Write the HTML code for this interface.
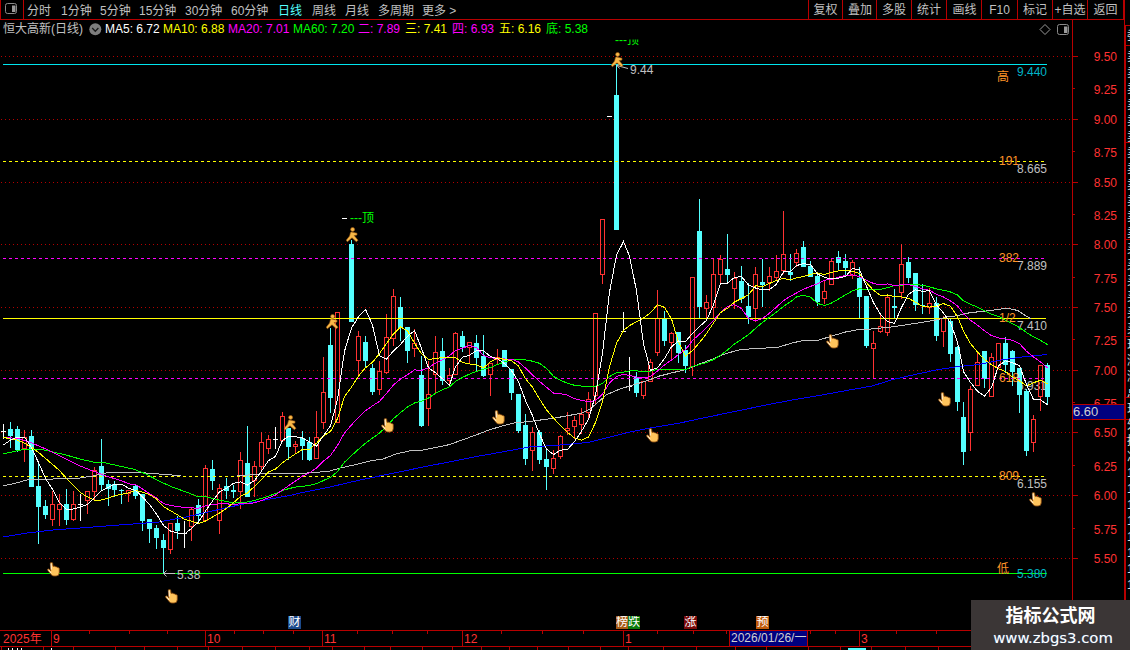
<!DOCTYPE html>
<html lang="zh-CN">
<head>
<meta charset="utf-8">
<title>恒大高新(日线)</title>
<style>
html,body{margin:0;padding:0;background:#000;}
body{width:1130px;height:650px;position:relative;overflow:hidden;font-family:"Liberation Sans","Noto Sans CJK SC",sans-serif;font-size:12px;color:#c0c0c0;}
.abs{position:absolute;white-space:nowrap;line-height:14px;}
.t{position:absolute;white-space:nowrap;top:3px;height:16px;line-height:16px;color:#c0c0c0;font-size:12px;}
.btn{position:absolute;top:0;height:19px;line-height:21px;text-align:center;color:#c0c0c0;border-left:1px solid #b80000;box-sizing:border-box;font-size:12px;}
.i{position:absolute;top:21px;height:16px;line-height:16px;white-space:nowrap;font-size:12px;}
.ax{position:absolute;left:1080px;width:37px;text-align:right;color:#ff3232;font-size:12px;line-height:14px;height:14px;}
.og{position:absolute;color:#ff9428;font-size:12px;line-height:14px;white-space:nowrap;}
.gv{position:absolute;color:#c0c0c0;font-size:12px;line-height:14px;white-space:nowrap;}
.mk{position:absolute;top:616px;width:13px;height:13px;line-height:13px;font-size:12px;color:#fff;text-align:center;overflow:hidden;}
.dl{position:absolute;top:632px;color:#ff3232;font-size:12px;line-height:14px;}
</style>
</head>
<body>
<div class="gv" style="left:1017px;top:162px">8.665</div>
<div class="gv" style="left:1017px;top:259px">7.889</div>
<div class="gv" style="left:1017px;top:319px">7.410</div>
<div class="gv" style="left:1017px;top:379px">6.931</div>
<div class="gv" style="left:1017px;top:477px">6.155</div>
<svg width="1130" height="650" viewBox="0 0 1130 650" style="position:absolute;left:0;top:0" shape-rendering="crispEdges">
<line x1="1" y1="56.5" x2="1071" y2="56.5" stroke="#b40000" stroke-width="1" stroke-dasharray="1 3"/>
<line x1="1" y1="119.5" x2="1071" y2="119.5" stroke="#b40000" stroke-width="1" stroke-dasharray="1 3"/>
<line x1="1" y1="182.5" x2="1071" y2="182.5" stroke="#b40000" stroke-width="1" stroke-dasharray="1 3"/>
<line x1="1" y1="244.5" x2="1071" y2="244.5" stroke="#b40000" stroke-width="1" stroke-dasharray="1 3"/>
<line x1="1" y1="307.5" x2="1071" y2="307.5" stroke="#b40000" stroke-width="1" stroke-dasharray="1 3"/>
<line x1="1" y1="370.5" x2="1071" y2="370.5" stroke="#b40000" stroke-width="1" stroke-dasharray="1 3"/>
<line x1="1" y1="432.5" x2="1071" y2="432.5" stroke="#b40000" stroke-width="1" stroke-dasharray="1 3"/>
<line x1="1" y1="495.5" x2="1071" y2="495.5" stroke="#b40000" stroke-width="1" stroke-dasharray="1 3"/>
<line x1="1" y1="558.5" x2="1071" y2="558.5" stroke="#b40000" stroke-width="1" stroke-dasharray="1 3"/>
<rect x="3" y="424" width="1" height="15" fill="#ffffff"/>
<rect x="1" y="431" width="5" height="1" fill="#ffffff"/>
<rect x="10" y="422" width="1" height="26" fill="#54ffff"/>
<rect x="8" y="429" width="5" height="7" fill="#54ffff"/>
<rect x="17" y="426" width="1" height="26" fill="#54ffff"/>
<rect x="15" y="429" width="5" height="21" fill="#54ffff"/>
<rect x="24" y="430" width="1" height="7" fill="#ff3232"/>
<rect x="24" y="449" width="1" height="13" fill="#ff3232"/>
<rect x="22.5" y="437.5" width="4" height="11" fill="none" stroke="#ff3232" stroke-width="1"/>
<rect x="31" y="430" width="1" height="57" fill="#54ffff"/>
<rect x="29" y="436" width="5" height="51" fill="#54ffff"/>
<rect x="38" y="462" width="1" height="82" fill="#54ffff"/>
<rect x="36" y="486" width="5" height="21" fill="#54ffff"/>
<rect x="45" y="500" width="1" height="19" fill="#54ffff"/>
<rect x="43" y="506" width="5" height="9" fill="#54ffff"/>
<rect x="52" y="491" width="1" height="13" fill="#ff3232"/>
<rect x="52" y="520" width="1" height="6" fill="#ff3232"/>
<rect x="50.5" y="504.5" width="4" height="15" fill="none" stroke="#ff3232" stroke-width="1"/>
<rect x="59" y="494" width="1" height="10" fill="#ff3232"/>
<rect x="59" y="510" width="1" height="16" fill="#ff3232"/>
<rect x="57.5" y="504.5" width="4" height="5" fill="none" stroke="#ff3232" stroke-width="1"/>
<rect x="66" y="489" width="1" height="36" fill="#54ffff"/>
<rect x="64" y="504" width="5" height="16" fill="#54ffff"/>
<rect x="73" y="491" width="1" height="13" fill="#ff3232"/>
<rect x="73" y="520" width="1" height="1" fill="#ff3232"/>
<rect x="71.5" y="504.5" width="4" height="15" fill="none" stroke="#ff3232" stroke-width="1"/>
<rect x="80" y="494" width="1" height="27" fill="#ffffff"/>
<rect x="78" y="504" width="5" height="1" fill="#ffffff"/>
<rect x="87" y="501" width="1" height="13" fill="#ff3232"/>
<rect x="85.5" y="491.5" width="4" height="9" fill="none" stroke="#ff3232" stroke-width="1"/>
<rect x="94" y="467" width="1" height="3" fill="#ff3232"/>
<rect x="94" y="492" width="1" height="8" fill="#ff3232"/>
<rect x="92.5" y="470.5" width="4" height="21" fill="none" stroke="#ff3232" stroke-width="1"/>
<rect x="101" y="439" width="1" height="52" fill="#54ffff"/>
<rect x="99" y="466" width="5" height="19" fill="#54ffff"/>
<rect x="108" y="480" width="1" height="26" fill="#54ffff"/>
<rect x="106" y="484" width="5" height="5" fill="#54ffff"/>
<rect x="114" y="481" width="1" height="16" fill="#54ffff"/>
<rect x="112" y="484" width="5" height="6" fill="#54ffff"/>
<rect x="121" y="489" width="1" height="15" fill="#54ffff"/>
<rect x="119" y="490" width="5" height="1" fill="#54ffff"/>
<rect x="128" y="494" width="1" height="8" fill="#ff3232"/>
<rect x="126.5" y="490.5" width="4" height="3" fill="none" stroke="#ff3232" stroke-width="1"/>
<rect x="135" y="485" width="1" height="14" fill="#54ffff"/>
<rect x="133" y="486" width="5" height="10" fill="#54ffff"/>
<rect x="142" y="494" width="1" height="37" fill="#54ffff"/>
<rect x="140" y="494" width="5" height="27" fill="#54ffff"/>
<rect x="149" y="519" width="1" height="24" fill="#54ffff"/>
<rect x="147" y="519" width="5" height="10" fill="#54ffff"/>
<rect x="156" y="525" width="1" height="24" fill="#54ffff"/>
<rect x="154" y="528" width="5" height="10" fill="#54ffff"/>
<rect x="163" y="534" width="1" height="40" fill="#54ffff"/>
<rect x="161" y="540" width="5" height="8" fill="#54ffff"/>
<rect x="170" y="550" width="1" height="4" fill="#ff3232"/>
<rect x="168.5" y="523.5" width="4" height="26" fill="none" stroke="#ff3232" stroke-width="1"/>
<rect x="177" y="516" width="1" height="23" fill="#54ffff"/>
<rect x="175" y="523" width="5" height="8" fill="#54ffff"/>
<rect x="184" y="521" width="1" height="27" fill="#ffffff"/>
<rect x="182" y="533" width="5" height="1" fill="#ffffff"/>
<rect x="191" y="507" width="1" height="2" fill="#ff3232"/>
<rect x="191" y="527" width="1" height="14" fill="#ff3232"/>
<rect x="189.5" y="509.5" width="4" height="17" fill="none" stroke="#ff3232" stroke-width="1"/>
<rect x="198" y="499" width="1" height="23" fill="#54ffff"/>
<rect x="196" y="505" width="5" height="11" fill="#54ffff"/>
<rect x="205" y="465" width="1" height="3" fill="#ff3232"/>
<rect x="205" y="521" width="1" height="1" fill="#ff3232"/>
<rect x="203.5" y="468.5" width="4" height="52" fill="none" stroke="#ff3232" stroke-width="1"/>
<rect x="212" y="460" width="1" height="30" fill="#54ffff"/>
<rect x="210" y="469" width="5" height="12" fill="#54ffff"/>
<rect x="219" y="484" width="1" height="4" fill="#ff3232"/>
<rect x="219" y="521" width="1" height="13" fill="#ff3232"/>
<rect x="217.5" y="488.5" width="4" height="32" fill="none" stroke="#ff3232" stroke-width="1"/>
<rect x="226" y="478" width="1" height="21" fill="#54ffff"/>
<rect x="224" y="486" width="5" height="5" fill="#54ffff"/>
<rect x="233" y="485" width="1" height="13" fill="#54ffff"/>
<rect x="231" y="490" width="5" height="2" fill="#54ffff"/>
<rect x="240" y="452" width="1" height="8" fill="#ff3232"/>
<rect x="240" y="492" width="1" height="17" fill="#ff3232"/>
<rect x="238.5" y="460.5" width="4" height="31" fill="none" stroke="#ff3232" stroke-width="1"/>
<rect x="247" y="426" width="1" height="71" fill="#54ffff"/>
<rect x="245" y="463" width="5" height="34" fill="#54ffff"/>
<rect x="254" y="461" width="1" height="5" fill="#ff3232"/>
<rect x="254" y="481" width="1" height="16" fill="#ff3232"/>
<rect x="252.5" y="466.5" width="4" height="14" fill="none" stroke="#ff3232" stroke-width="1"/>
<rect x="261" y="432" width="1" height="10" fill="#ff3232"/>
<rect x="261" y="467" width="1" height="4" fill="#ff3232"/>
<rect x="259.5" y="442.5" width="4" height="24" fill="none" stroke="#ff3232" stroke-width="1"/>
<rect x="268" y="435" width="1" height="4" fill="#ff3232"/>
<rect x="268" y="449" width="1" height="5" fill="#ff3232"/>
<rect x="266.5" y="439.5" width="4" height="9" fill="none" stroke="#ff3232" stroke-width="1"/>
<rect x="275" y="427" width="1" height="22" fill="#ffffff"/>
<rect x="273" y="439" width="5" height="1" fill="#ffffff"/>
<rect x="282" y="412" width="1" height="4" fill="#ff3232"/>
<rect x="280.5" y="416.5" width="4" height="24" fill="none" stroke="#ff3232" stroke-width="1"/>
<rect x="288" y="428" width="1" height="32" fill="#54ffff"/>
<rect x="286" y="428" width="5" height="19" fill="#54ffff"/>
<rect x="295" y="441" width="1" height="3" fill="#ff3232"/>
<rect x="295" y="447" width="1" height="7" fill="#ff3232"/>
<rect x="293.5" y="444.5" width="4" height="2" fill="none" stroke="#ff3232" stroke-width="1"/>
<rect x="302" y="431" width="1" height="29" fill="#54ffff"/>
<rect x="300" y="438" width="5" height="8" fill="#54ffff"/>
<rect x="309" y="437" width="1" height="24" fill="#54ffff"/>
<rect x="307" y="442" width="5" height="18" fill="#54ffff"/>
<rect x="316" y="411" width="1" height="26" fill="#ff3232"/>
<rect x="314.5" y="437.5" width="4" height="21" fill="none" stroke="#ff3232" stroke-width="1"/>
<rect x="323" y="357" width="1" height="35" fill="#ff3232"/>
<rect x="323" y="423" width="1" height="6" fill="#ff3232"/>
<rect x="321.5" y="392.5" width="4" height="30" fill="none" stroke="#ff3232" stroke-width="1"/>
<rect x="330" y="328" width="1" height="85" fill="#54ffff"/>
<rect x="328" y="345" width="5" height="53" fill="#54ffff"/>
<rect x="335.5" y="312.5" width="4" height="110" fill="none" stroke="#ff3232" stroke-width="1"/>
<rect x="342" y="218" width="5" height="1" fill="#ffffff"/>
<rect x="351" y="240" width="1" height="82" fill="#54ffff"/>
<rect x="349" y="244" width="5" height="78" fill="#54ffff"/>
<rect x="358" y="331" width="1" height="5" fill="#ff3232"/>
<rect x="358" y="361" width="1" height="15" fill="#ff3232"/>
<rect x="356.5" y="336.5" width="4" height="24" fill="none" stroke="#ff3232" stroke-width="1"/>
<rect x="365" y="336" width="1" height="31" fill="#54ffff"/>
<rect x="363" y="342" width="5" height="19" fill="#54ffff"/>
<rect x="372" y="364" width="1" height="31" fill="#54ffff"/>
<rect x="370" y="368" width="5" height="24" fill="#54ffff"/>
<rect x="379" y="361" width="1" height="10" fill="#ff3232"/>
<rect x="379" y="390" width="1" height="5" fill="#ff3232"/>
<rect x="377.5" y="371.5" width="4" height="18" fill="none" stroke="#ff3232" stroke-width="1"/>
<rect x="386" y="314" width="1" height="23" fill="#ff3232"/>
<rect x="386" y="373" width="1" height="1" fill="#ff3232"/>
<rect x="384.5" y="337.5" width="4" height="35" fill="none" stroke="#ff3232" stroke-width="1"/>
<rect x="393" y="289" width="1" height="7" fill="#ff3232"/>
<rect x="393" y="339" width="1" height="7" fill="#ff3232"/>
<rect x="391.5" y="296.5" width="4" height="42" fill="none" stroke="#ff3232" stroke-width="1"/>
<rect x="400" y="297" width="1" height="44" fill="#54ffff"/>
<rect x="398" y="307" width="5" height="21" fill="#54ffff"/>
<rect x="407" y="327" width="1" height="36" fill="#54ffff"/>
<rect x="405" y="327" width="5" height="24" fill="#54ffff"/>
<rect x="414" y="329" width="1" height="14" fill="#ff3232"/>
<rect x="414" y="349" width="1" height="8" fill="#ff3232"/>
<rect x="412.5" y="343.5" width="4" height="5" fill="none" stroke="#ff3232" stroke-width="1"/>
<rect x="421" y="356" width="1" height="71" fill="#54ffff"/>
<rect x="419" y="375" width="5" height="51" fill="#54ffff"/>
<rect x="428" y="361" width="1" height="33" fill="#ff3232"/>
<rect x="428" y="409" width="1" height="17" fill="#ff3232"/>
<rect x="426.5" y="394.5" width="4" height="14" fill="none" stroke="#ff3232" stroke-width="1"/>
<rect x="435" y="336" width="1" height="16" fill="#ff3232"/>
<rect x="435" y="375" width="1" height="18" fill="#ff3232"/>
<rect x="433.5" y="352.5" width="4" height="22" fill="none" stroke="#ff3232" stroke-width="1"/>
<rect x="442" y="338" width="1" height="47" fill="#54ffff"/>
<rect x="440" y="351" width="5" height="30" fill="#54ffff"/>
<rect x="449" y="368" width="1" height="7" fill="#ff3232"/>
<rect x="449" y="381" width="1" height="6" fill="#ff3232"/>
<rect x="447.5" y="375.5" width="4" height="5" fill="none" stroke="#ff3232" stroke-width="1"/>
<rect x="455" y="332" width="1" height="1" fill="#ff3232"/>
<rect x="453.5" y="333.5" width="4" height="41" fill="none" stroke="#ff3232" stroke-width="1"/>
<rect x="462" y="331" width="1" height="21" fill="#54ffff"/>
<rect x="460" y="336" width="5" height="11" fill="#54ffff"/>
<rect x="469" y="348" width="1" height="16" fill="#ff3232"/>
<rect x="467.5" y="342.5" width="4" height="5" fill="none" stroke="#ff3232" stroke-width="1"/>
<rect x="476" y="335" width="1" height="37" fill="#54ffff"/>
<rect x="474" y="343" width="5" height="15" fill="#54ffff"/>
<rect x="483" y="335" width="1" height="42" fill="#54ffff"/>
<rect x="481" y="356" width="5" height="20" fill="#54ffff"/>
<rect x="490" y="375" width="1" height="21" fill="#ff3232"/>
<rect x="488.5" y="363.5" width="4" height="11" fill="none" stroke="#ff3232" stroke-width="1"/>
<rect x="497" y="349" width="1" height="8" fill="#ff3232"/>
<rect x="497" y="360" width="1" height="5" fill="#ff3232"/>
<rect x="495.5" y="357.5" width="4" height="2" fill="none" stroke="#ff3232" stroke-width="1"/>
<rect x="504" y="350" width="1" height="17" fill="#54ffff"/>
<rect x="502" y="350" width="5" height="17" fill="#54ffff"/>
<rect x="511" y="369" width="1" height="31" fill="#54ffff"/>
<rect x="509" y="369" width="5" height="24" fill="#54ffff"/>
<rect x="518" y="394" width="1" height="39" fill="#54ffff"/>
<rect x="516" y="394" width="5" height="37" fill="#54ffff"/>
<rect x="525" y="414" width="1" height="51" fill="#54ffff"/>
<rect x="523" y="425" width="5" height="34" fill="#54ffff"/>
<rect x="532" y="427" width="1" height="5" fill="#ff3232"/>
<rect x="532" y="451" width="1" height="20" fill="#ff3232"/>
<rect x="530.5" y="432.5" width="4" height="18" fill="none" stroke="#ff3232" stroke-width="1"/>
<rect x="539" y="430" width="1" height="34" fill="#54ffff"/>
<rect x="537" y="432" width="5" height="28" fill="#54ffff"/>
<rect x="546" y="448" width="1" height="42" fill="#54ffff"/>
<rect x="544" y="459" width="5" height="8" fill="#54ffff"/>
<rect x="553" y="450" width="1" height="8" fill="#ff3232"/>
<rect x="553" y="469" width="1" height="5" fill="#ff3232"/>
<rect x="551.5" y="458.5" width="4" height="10" fill="none" stroke="#ff3232" stroke-width="1"/>
<rect x="560" y="435" width="1" height="1" fill="#ff3232"/>
<rect x="560" y="457" width="1" height="2" fill="#ff3232"/>
<rect x="558.5" y="436.5" width="4" height="20" fill="none" stroke="#ff3232" stroke-width="1"/>
<rect x="567" y="412" width="1" height="16" fill="#ff3232"/>
<rect x="567" y="431" width="1" height="4" fill="#ff3232"/>
<rect x="565.5" y="428.5" width="4" height="2" fill="none" stroke="#ff3232" stroke-width="1"/>
<rect x="574" y="416" width="1" height="4" fill="#ff3232"/>
<rect x="574" y="427" width="1" height="12" fill="#ff3232"/>
<rect x="572.5" y="420.5" width="4" height="6" fill="none" stroke="#ff3232" stroke-width="1"/>
<rect x="581" y="408" width="1" height="6" fill="#ff3232"/>
<rect x="581" y="425" width="1" height="9" fill="#ff3232"/>
<rect x="579.5" y="414.5" width="4" height="10" fill="none" stroke="#ff3232" stroke-width="1"/>
<rect x="588" y="392" width="1" height="7" fill="#ff3232"/>
<rect x="588" y="413" width="1" height="6" fill="#ff3232"/>
<rect x="586.5" y="399.5" width="4" height="13" fill="none" stroke="#ff3232" stroke-width="1"/>
<rect x="595" y="396" width="1" height="9" fill="#ff3232"/>
<rect x="593.5" y="313.5" width="4" height="82" fill="none" stroke="#ff3232" stroke-width="1"/>
<rect x="602" y="275" width="1" height="9" fill="#ff3232"/>
<rect x="600.5" y="219.5" width="4" height="55" fill="none" stroke="#ff3232" stroke-width="1"/>
<rect x="607" y="116" width="5" height="1" fill="#ffffff"/>
<rect x="616" y="64" width="1" height="166" fill="#54ffff"/>
<rect x="614" y="95" width="5" height="135" fill="#54ffff"/>
<rect x="623" y="312" width="1" height="20" fill="#ffffff"/>
<rect x="621" y="331" width="5" height="1" fill="#ffffff"/>
<rect x="629" y="357" width="1" height="34" fill="#ffffff"/>
<rect x="627" y="386" width="5" height="1" fill="#ffffff"/>
<rect x="636" y="372" width="1" height="25" fill="#54ffff"/>
<rect x="634" y="377" width="5" height="16" fill="#54ffff"/>
<rect x="643" y="396" width="1" height="3" fill="#ff3232"/>
<rect x="641.5" y="381.5" width="4" height="14" fill="none" stroke="#ff3232" stroke-width="1"/>
<rect x="650" y="359" width="1" height="3" fill="#ff3232"/>
<rect x="648.5" y="362.5" width="4" height="19" fill="none" stroke="#ff3232" stroke-width="1"/>
<rect x="657" y="290" width="1" height="28" fill="#ff3232"/>
<rect x="657" y="353" width="1" height="3" fill="#ff3232"/>
<rect x="655.5" y="318.5" width="4" height="34" fill="none" stroke="#ff3232" stroke-width="1"/>
<rect x="664" y="311" width="1" height="35" fill="#54ffff"/>
<rect x="662" y="318" width="5" height="23" fill="#54ffff"/>
<rect x="671" y="332" width="1" height="1" fill="#ff3232"/>
<rect x="671" y="343" width="1" height="17" fill="#ff3232"/>
<rect x="669.5" y="333.5" width="4" height="9" fill="none" stroke="#ff3232" stroke-width="1"/>
<rect x="678" y="332" width="1" height="31" fill="#54ffff"/>
<rect x="676" y="332" width="5" height="21" fill="#54ffff"/>
<rect x="685" y="345" width="1" height="28" fill="#54ffff"/>
<rect x="683" y="350" width="5" height="16" fill="#54ffff"/>
<rect x="692" y="367" width="1" height="9" fill="#ff3232"/>
<rect x="690.5" y="277.5" width="4" height="89" fill="none" stroke="#ff3232" stroke-width="1"/>
<rect x="699" y="199" width="1" height="120" fill="#54ffff"/>
<rect x="697" y="231" width="5" height="76" fill="#54ffff"/>
<rect x="706" y="295" width="1" height="7" fill="#ff3232"/>
<rect x="706" y="309" width="1" height="10" fill="#ff3232"/>
<rect x="704.5" y="302.5" width="4" height="6" fill="none" stroke="#ff3232" stroke-width="1"/>
<rect x="713" y="258" width="1" height="16" fill="#ff3232"/>
<rect x="713" y="308" width="1" height="10" fill="#ff3232"/>
<rect x="711.5" y="274.5" width="4" height="33" fill="none" stroke="#ff3232" stroke-width="1"/>
<rect x="720" y="255" width="1" height="4" fill="#ff3232"/>
<rect x="720" y="275" width="1" height="10" fill="#ff3232"/>
<rect x="718.5" y="259.5" width="4" height="15" fill="none" stroke="#ff3232" stroke-width="1"/>
<rect x="727" y="234" width="1" height="49" fill="#54ffff"/>
<rect x="725" y="269" width="5" height="6" fill="#54ffff"/>
<rect x="734" y="272" width="1" height="6" fill="#ff3232"/>
<rect x="734" y="289" width="1" height="20" fill="#ff3232"/>
<rect x="732.5" y="278.5" width="4" height="10" fill="none" stroke="#ff3232" stroke-width="1"/>
<rect x="741" y="266" width="1" height="37" fill="#54ffff"/>
<rect x="739" y="281" width="5" height="18" fill="#54ffff"/>
<rect x="748" y="283" width="1" height="41" fill="#54ffff"/>
<rect x="746" y="306" width="5" height="11" fill="#54ffff"/>
<rect x="755" y="267" width="1" height="7" fill="#ff3232"/>
<rect x="755" y="309" width="1" height="13" fill="#ff3232"/>
<rect x="753.5" y="274.5" width="4" height="34" fill="none" stroke="#ff3232" stroke-width="1"/>
<rect x="762" y="259" width="1" height="48" fill="#54ffff"/>
<rect x="760" y="282" width="5" height="3" fill="#54ffff"/>
<rect x="769" y="267" width="1" height="9" fill="#ff3232"/>
<rect x="769" y="283" width="1" height="8" fill="#ff3232"/>
<rect x="767.5" y="276.5" width="4" height="6" fill="none" stroke="#ff3232" stroke-width="1"/>
<rect x="776" y="255" width="1" height="16" fill="#ff3232"/>
<rect x="776" y="278" width="1" height="2" fill="#ff3232"/>
<rect x="774.5" y="271.5" width="4" height="6" fill="none" stroke="#ff3232" stroke-width="1"/>
<rect x="783" y="211" width="1" height="43" fill="#ff3232"/>
<rect x="783" y="271" width="1" height="3" fill="#ff3232"/>
<rect x="781.5" y="254.5" width="4" height="16" fill="none" stroke="#ff3232" stroke-width="1"/>
<rect x="790" y="254" width="1" height="27" fill="#54ffff"/>
<rect x="788" y="272" width="5" height="3" fill="#54ffff"/>
<rect x="796" y="249" width="1" height="4" fill="#ff3232"/>
<rect x="796" y="263" width="1" height="4" fill="#ff3232"/>
<rect x="794.5" y="253.5" width="4" height="9" fill="none" stroke="#ff3232" stroke-width="1"/>
<rect x="803" y="241" width="1" height="26" fill="#54ffff"/>
<rect x="801" y="247" width="5" height="20" fill="#54ffff"/>
<rect x="810" y="261" width="1" height="16" fill="#54ffff"/>
<rect x="808" y="266" width="5" height="11" fill="#54ffff"/>
<rect x="817" y="275" width="1" height="31" fill="#54ffff"/>
<rect x="815" y="276" width="5" height="26" fill="#54ffff"/>
<rect x="824" y="281" width="1" height="10" fill="#ff3232"/>
<rect x="824" y="299" width="1" height="5" fill="#ff3232"/>
<rect x="822.5" y="291.5" width="4" height="7" fill="none" stroke="#ff3232" stroke-width="1"/>
<rect x="831" y="258" width="1" height="3" fill="#ff3232"/>
<rect x="829.5" y="261.5" width="4" height="23" fill="none" stroke="#ff3232" stroke-width="1"/>
<rect x="838" y="251" width="1" height="19" fill="#54ffff"/>
<rect x="836" y="257" width="5" height="6" fill="#54ffff"/>
<rect x="845" y="254" width="1" height="21" fill="#54ffff"/>
<rect x="843" y="261" width="5" height="7" fill="#54ffff"/>
<rect x="852" y="260" width="1" height="2" fill="#ff3232"/>
<rect x="852" y="276" width="1" height="3" fill="#ff3232"/>
<rect x="850.5" y="262.5" width="4" height="13" fill="none" stroke="#ff3232" stroke-width="1"/>
<rect x="859" y="267" width="1" height="52" fill="#54ffff"/>
<rect x="857" y="278" width="5" height="19" fill="#54ffff"/>
<rect x="866" y="296" width="1" height="52" fill="#54ffff"/>
<rect x="864" y="296" width="5" height="50" fill="#54ffff"/>
<rect x="873" y="331" width="1" height="12" fill="#ff3232"/>
<rect x="873" y="349" width="1" height="30" fill="#ff3232"/>
<rect x="871.5" y="343.5" width="4" height="5" fill="none" stroke="#ff3232" stroke-width="1"/>
<rect x="880" y="315" width="1" height="11" fill="#ff3232"/>
<rect x="880" y="332" width="1" height="1" fill="#ff3232"/>
<rect x="878.5" y="326.5" width="4" height="5" fill="none" stroke="#ff3232" stroke-width="1"/>
<rect x="887" y="294" width="1" height="3" fill="#ff3232"/>
<rect x="887" y="333" width="1" height="3" fill="#ff3232"/>
<rect x="885.5" y="297.5" width="4" height="35" fill="none" stroke="#ff3232" stroke-width="1"/>
<rect x="894" y="289" width="1" height="30" fill="#54ffff"/>
<rect x="892" y="306" width="5" height="2" fill="#54ffff"/>
<rect x="901" y="244" width="1" height="20" fill="#ff3232"/>
<rect x="901" y="293" width="1" height="6" fill="#ff3232"/>
<rect x="899.5" y="264.5" width="4" height="28" fill="none" stroke="#ff3232" stroke-width="1"/>
<rect x="908" y="257" width="1" height="26" fill="#54ffff"/>
<rect x="906" y="262" width="5" height="16" fill="#54ffff"/>
<rect x="915" y="273" width="1" height="38" fill="#54ffff"/>
<rect x="913" y="273" width="5" height="32" fill="#54ffff"/>
<rect x="922" y="284" width="1" height="30" fill="#54ffff"/>
<rect x="920" y="305" width="5" height="1" fill="#54ffff"/>
<rect x="929" y="288" width="1" height="15" fill="#ff3232"/>
<rect x="929" y="308" width="1" height="6" fill="#ff3232"/>
<rect x="927.5" y="303.5" width="4" height="4" fill="none" stroke="#ff3232" stroke-width="1"/>
<rect x="936" y="297" width="1" height="44" fill="#54ffff"/>
<rect x="934" y="303" width="5" height="33" fill="#54ffff"/>
<rect x="943" y="316" width="1" height="2" fill="#ff3232"/>
<rect x="943" y="332" width="1" height="15" fill="#ff3232"/>
<rect x="941.5" y="318.5" width="4" height="13" fill="none" stroke="#ff3232" stroke-width="1"/>
<rect x="950" y="318" width="1" height="44" fill="#54ffff"/>
<rect x="948" y="321" width="5" height="33" fill="#54ffff"/>
<rect x="957" y="346" width="1" height="65" fill="#54ffff"/>
<rect x="955" y="347" width="5" height="55" fill="#54ffff"/>
<rect x="963" y="402" width="1" height="63" fill="#54ffff"/>
<rect x="961" y="417" width="5" height="35" fill="#54ffff"/>
<rect x="970" y="386" width="1" height="3" fill="#ff3232"/>
<rect x="970" y="433" width="1" height="18" fill="#ff3232"/>
<rect x="968.5" y="389.5" width="4" height="43" fill="none" stroke="#ff3232" stroke-width="1"/>
<rect x="977" y="351" width="1" height="11" fill="#ff3232"/>
<rect x="975.5" y="362.5" width="4" height="23" fill="none" stroke="#ff3232" stroke-width="1"/>
<rect x="984" y="351" width="1" height="37" fill="#54ffff"/>
<rect x="982" y="351" width="5" height="28" fill="#54ffff"/>
<rect x="991" y="353" width="1" height="4" fill="#ff3232"/>
<rect x="989.5" y="357.5" width="4" height="39" fill="none" stroke="#ff3232" stroke-width="1"/>
<rect x="996.5" y="343.5" width="4" height="24" fill="none" stroke="#ff3232" stroke-width="1"/>
<rect x="1005" y="337" width="1" height="36" fill="#54ffff"/>
<rect x="1003" y="343" width="5" height="22" fill="#54ffff"/>
<rect x="1012" y="350" width="1" height="36" fill="#54ffff"/>
<rect x="1010" y="351" width="5" height="21" fill="#54ffff"/>
<rect x="1019" y="368" width="1" height="45" fill="#54ffff"/>
<rect x="1017" y="368" width="5" height="27" fill="#54ffff"/>
<rect x="1026" y="389" width="1" height="67" fill="#54ffff"/>
<rect x="1024" y="391" width="5" height="60" fill="#54ffff"/>
<rect x="1033" y="415" width="1" height="4" fill="#ff3232"/>
<rect x="1033" y="443" width="1" height="9" fill="#ff3232"/>
<rect x="1031.5" y="419.5" width="4" height="23" fill="none" stroke="#ff3232" stroke-width="1"/>
<rect x="1040" y="397" width="1" height="14" fill="#ff3232"/>
<rect x="1038.5" y="365.5" width="4" height="31" fill="none" stroke="#ff3232" stroke-width="1"/>
<rect x="1047" y="363" width="1" height="42" fill="#54ffff"/>
<rect x="1045" y="365" width="5" height="32" fill="#54ffff"/>
<line x1="3" y1="64.5" x2="1047" y2="64.5" stroke="#00e5ee" stroke-width="1"/>
<line x1="3" y1="161.5" x2="1044" y2="161.5" stroke="#ffff00" stroke-width="1" stroke-dasharray="3 3"/>
<line x1="3" y1="258.5" x2="1044" y2="258.5" stroke="#ff00ff" stroke-width="1" stroke-dasharray="3 3"/>
<line x1="3" y1="318.5" x2="1046" y2="318.5" stroke="#ffff00" stroke-width="1"/>
<line x1="3" y1="378.5" x2="1046" y2="378.5" stroke="#ff00ff" stroke-width="1" stroke-dasharray="3 3"/>
<line x1="3" y1="476.5" x2="1044" y2="476.5" stroke="#ffff00" stroke-width="1" stroke-dasharray="3 3"/>
<line x1="3" y1="573.5" x2="1047" y2="573.5" stroke="#00ff00" stroke-width="1"/>
<polyline points="3.0,537.0 27.0,533.0 53.0,530.0 80.0,528.0 106.0,526.0 133.0,524.0 159.0,522.0 186.0,517.0 212.0,511.0 239.0,505.0 265.0,500.0 292.0,495.0 300.0,493.0 330.0,487.0 360.0,480.0 404.0,471.0 423.0,467.0 449.0,462.0 476.0,456.6 502.0,452.0 529.0,447.0 555.0,445.5 582.0,443.0 590.0,442.0 610.0,437.0 630.0,432.0 650.0,428.0 680.0,423.0 689.0,421.0 712.7,416.0 739.0,410.6 766.0,405.0 792.0,400.0 819.0,395.5 845.5,390.7 872.0,386.0 893.0,379.5 914.6,374.6 936.0,370.0 957.7,366.6 979.0,364.5 1000.8,360.0 1022.0,357.0 1043.8,354.8 1047.0,354.0" fill="none" stroke="#0000ff" stroke-width="1"/>
<polyline points="3.0,486.0 16.0,483.0 27.0,480.0 53.0,479.0 80.0,478.0 93.0,476.0 106.0,473.0 119.0,472.0 133.0,472.0 146.0,473.0 159.0,474.0 172.0,475.0 181.0,476.0" fill="none" stroke="#c0c0c0" stroke-width="1"/>
<polyline points="237.0,476.0 260.0,474.0 300.0,473.6 320.0,472.0 330.0,471.0 340.0,468.0 356.0,464.6 370.0,461.0 383.0,459.0 396.0,454.0 409.0,451.0 423.0,450.0 449.0,444.7 476.0,435.0 489.0,430.0 502.0,426.0 516.0,422.6 529.0,421.6 555.0,418.0 569.0,415.5 582.0,413.0 590.0,409.0 593.0,406.6 606.5,394.7 620.0,389.0 633.0,385.0 646.0,381.0 659.6,376.0 673.0,372.6 686.0,369.5 699.5,364.0 712.7,359.0 726.0,353.5 739.0,350.0 752.6,348.7 766.0,348.0 779.0,347.0 792.0,343.0 805.6,340.0 819.0,340.0 832.0,336.0 845.5,332.0 858.7,329.6 871.5,329.0 893.0,326.8 914.6,323.5 936.0,320.0 947.0,317.0 957.7,315.6 968.5,313.0 979.0,311.7 990.0,310.6 1000.8,309.0 1009.0,308.5 1018.0,310.6 1024.5,315.0 1031.0,319.0" fill="none" stroke="#c0c0c0" stroke-width="1"/>
<polyline points="3.0,454.0 16.0,451.0 27.0,449.0 40.0,449.0 53.0,452.0 66.0,455.0 80.0,459.0 93.0,462.0 106.0,463.0 119.0,466.0 133.0,469.0 146.0,474.0 159.0,481.0 172.0,487.0 186.0,492.0 199.0,497.0 205.5,496.7 212.5,498.3 219.5,500.1 226.5,501.4 233.5,503.2 240.5,502.4 247.5,502.0 254.5,500.4 261.5,498.4 268.5,496.2 275.5,493.5 282.5,490.6 288.5,488.7 295.5,487.1 302.5,486.3 309.5,485.4 316.5,483.7 323.5,480.5 330.5,477.4 337.5,471.5 344.5,462.2 351.5,455.6 358.5,449.2 365.5,443.3 372.5,438.1 379.5,433.0 386.5,426.6 393.5,418.7 400.5,412.6 407.5,407.1 414.5,403.0 421.5,401.1 428.5,398.0 435.5,393.4 442.5,389.7 449.5,386.9 455.5,381.4 462.5,377.4 469.5,374.1 476.5,371.4 483.5,369.2 490.5,367.5 497.5,364.5 504.5,361.9 511.5,360.1 518.5,359.2 525.5,359.9 532.5,361.2 539.5,363.3 546.5,368.4 553.5,376.4 560.5,380.2 567.5,383.3 574.5,385.3 581.5,386.1 588.5,387.0 595.5,386.2 602.5,383.6 609.5,376.6 616.5,372.6 623.5,372.2 629.5,370.9 636.5,370.8 643.5,371.8 650.5,371.2 657.5,369.3 664.5,369.5 671.5,369.1 678.5,369.4 685.5,369.7 692.5,366.4 699.5,364.5 706.5,362.7 713.5,359.6 720.5,355.2 727.5,350.0 734.5,344.0 741.5,339.5 748.5,334.7 755.5,328.3 762.5,322.5 769.5,317.2 776.5,312.0 783.5,306.4 790.5,301.8 796.5,296.9 803.5,295.3 810.5,297.2 817.5,303.4 824.5,305.5 831.5,303.1 838.5,299.0 845.5,294.8 852.5,290.9 859.5,288.7 866.5,289.6 873.5,289.7 880.5,289.4 887.5,287.6 894.5,285.7 901.5,285.2 908.5,284.3 915.5,284.3 922.5,285.4 929.5,286.8 936.5,288.9 943.5,290.2 950.5,292.0 957.5,294.9 963.5,300.8 970.5,304.3 977.5,307.1 984.5,310.7 991.5,314.1 998.5,316.4 1005.5,320.1 1012.5,323.6 1019.5,327.6 1026.5,332.5 1033.5,336.8 1040.5,340.3 1047.5,344.7" fill="none" stroke="#00ff00" stroke-width="1"/>
<polyline points="3.0,437.0 20.0,439.0 32.0,443.0 48.0,450.0 64.0,458.0 80.0,466.0 93.0,471.0 106.0,476.0 119.0,480.0 130.0,484.0 135.5,484.5 142.5,488.9 149.5,493.6 156.5,498.0 163.5,503.5 170.5,505.4 177.5,506.6 184.5,507.5 191.5,507.8 198.5,508.3 205.5,505.8 212.5,504.6 219.5,503.8 226.5,503.7 233.5,504.8 240.5,503.6 247.5,503.9 254.5,502.8 261.5,500.4 268.5,497.9 275.5,495.1 282.5,489.9 288.5,485.8 295.5,481.1 302.5,476.0 309.5,472.8 316.5,468.1 323.5,461.1 330.5,455.5 337.5,445.4 344.5,432.9 351.5,424.9 358.5,417.3 365.5,410.8 372.5,405.8 379.5,401.4 386.5,393.4 393.5,384.9 400.5,379.1 407.5,374.7 414.5,369.9 421.5,370.4 428.5,367.8 435.5,363.1 442.5,359.9 449.5,355.7 455.5,350.5 462.5,348.2 469.5,345.4 476.5,347.7 483.5,355.6 490.5,357.6 497.5,358.7 504.5,359.0 511.5,359.1 518.5,362.0 525.5,368.1 532.5,374.9 539.5,381.4 546.5,387.2 553.5,393.0 560.5,393.6 567.5,395.2 574.5,398.6 581.5,400.4 588.5,401.6 595.5,400.6 602.5,394.2 609.5,382.9 616.5,376.5 623.5,374.3 629.5,375.4 636.5,377.2 643.5,377.9 650.5,376.4 657.5,370.9 664.5,364.9 671.5,360.0 678.5,354.6 685.5,349.6 692.5,340.6 699.5,334.1 706.5,327.8 713.5,320.4 720.5,312.7 727.5,306.4 734.5,304.7 741.5,308.6 748.5,318.6 755.5,320.9 762.5,318.6 769.5,313.1 776.5,307.0 783.5,300.6 790.5,296.2 796.5,293.0 803.5,289.3 810.5,286.4 817.5,283.9 824.5,280.2 831.5,279.4 838.5,277.2 845.5,275.4 852.5,274.9 859.5,276.7 866.5,280.2 873.5,283.5 880.5,284.9 887.5,283.9 894.5,285.6 901.5,284.6 908.5,284.6 915.5,286.3 922.5,288.9 929.5,290.3 936.5,294.4 943.5,297.0 950.5,300.9 957.5,305.9 963.5,313.9 970.5,320.2 977.5,325.2 984.5,330.8 991.5,335.6 998.5,337.9 1005.5,338.9 1012.5,340.2 1019.5,343.6 1026.5,351.3 1033.5,356.9 1040.5,361.9 1047.5,367.9" fill="none" stroke="#ff00ff" stroke-width="1"/>
<polyline points="3.0,437.0 10.0,439.0 17.0,440.0 24.0,443.0 31.0,447.0 38.0,452.0 45.0,458.0 52.0,464.0 59.0,470.0 66.5,478.5 73.5,485.8 80.5,492.7 87.5,496.9 94.5,500.2 101.5,500.0 108.5,498.2 114.5,495.7 121.5,494.3 128.5,492.9 135.5,490.5 142.5,492.1 149.5,494.5 156.5,499.1 163.5,506.8 170.5,510.7 177.5,514.9 184.5,519.3 191.5,521.2 198.5,523.7 205.5,521.0 212.5,517.0 219.5,513.0 226.5,508.3 233.5,502.7 240.5,496.4 247.5,493.0 254.5,486.3 261.5,479.6 268.5,472.0 275.5,469.1 282.5,462.7 288.5,458.5 295.5,453.9 302.5,449.3 309.5,449.2 316.5,443.3 323.5,435.9 330.5,431.4 337.5,418.7 344.5,396.6 351.5,387.1 358.5,376.1 365.5,367.7 372.5,362.3 379.5,353.5 386.5,343.5 393.5,333.9 400.5,326.9 407.5,330.7 414.5,343.2 421.5,353.6 428.5,359.4 435.5,358.6 442.5,357.5 449.5,357.9 455.5,357.5 462.5,362.5 469.5,364.0 476.5,364.7 483.5,367.9 490.5,361.7 497.5,358.0 504.5,359.4 511.5,360.6 518.5,366.1 525.5,378.6 532.5,387.2 539.5,398.9 546.5,409.8 553.5,418.1 560.5,425.4 567.5,432.5 574.5,437.9 581.5,440.1 588.5,437.0 595.5,422.5 602.5,401.2 609.5,366.9 616.5,343.2 623.5,330.5 629.5,325.5 636.5,321.9 643.5,318.0 650.5,312.8 657.5,304.7 664.5,307.4 671.5,318.8 678.5,342.4 685.5,356.0 692.5,350.6 699.5,342.6 706.5,333.6 713.5,322.9 720.5,312.6 727.5,308.2 734.5,302.0 741.5,298.5 748.5,294.9 755.5,285.8 762.5,286.5 769.5,283.5 776.5,280.4 783.5,278.4 790.5,279.9 796.5,277.8 803.5,276.6 810.5,274.4 817.5,272.9 824.5,274.6 831.5,272.3 838.5,270.9 845.5,270.5 852.5,271.3 859.5,273.5 866.5,282.7 873.5,290.4 880.5,295.4 887.5,295.0 894.5,296.6 901.5,296.9 908.5,298.4 915.5,302.1 922.5,306.4 929.5,307.1 936.5,306.1 943.5,303.6 950.5,306.3 957.5,316.7 963.5,331.1 970.5,343.6 977.5,352.1 984.5,359.5 991.5,364.7 998.5,368.7 1005.5,371.6 1012.5,376.9 1019.5,381.0 1026.5,385.9 1033.5,382.7 1040.5,380.3 1047.5,383.7" fill="none" stroke="#ffff00" stroke-width="1"/>
<polyline points="3.5,445.0 10.5,440.0 17.5,437.0 24.5,437.0 31.5,447.6 38.5,462.6 45.5,478.4 52.5,489.4 59.5,502.8 66.5,509.4 73.5,509.0 80.5,507.0 87.5,504.4 94.5,497.6 101.5,490.6 108.5,487.4 114.5,484.4 121.5,484.2 128.5,488.2 135.5,490.4 142.5,496.8 149.5,504.6 156.5,514.0 163.5,525.4 170.5,531.0 177.5,533.0 184.5,534.0 191.5,528.4 198.5,522.0 205.5,511.0 212.5,501.0 219.5,492.0 226.5,488.2 233.5,483.4 240.5,481.8 247.5,485.0 254.5,480.6 261.5,471.0 268.5,460.6 275.5,456.4 282.5,440.4 288.5,436.4 295.5,436.8 302.5,438.0 309.5,442.0 316.5,446.2 323.5,435.4 330.5,426.0 337.5,399.4 344.5,351.2 351.5,328.0 358.5,316.8 365.5,309.4 372.5,325.2 379.5,355.8 386.5,359.0 393.5,351.0 400.5,344.4 407.5,336.2 414.5,330.6 421.5,348.2 428.5,367.8 435.5,372.8 442.5,378.8 449.5,385.2 455.5,366.8 462.5,357.2 469.5,355.2 476.5,350.6 483.5,350.6 490.5,356.6 497.5,358.8 504.5,363.6 511.5,370.6 518.5,381.6 525.5,400.6 532.5,415.6 539.5,434.2 546.5,449.0 553.5,454.6 560.5,450.2 567.5,449.4 574.5,441.6 581.5,431.2 588.5,419.4 595.5,394.8 602.5,353.0 609.5,292.2 616.5,255.2 623.5,241.6 629.5,256.2 636.5,290.8 643.5,343.8 650.5,370.4 657.5,367.8 664.5,358.6 671.5,346.8 678.5,341.0 685.5,341.6 692.5,333.4 699.5,326.6 706.5,320.4 713.5,304.8 720.5,283.6 727.5,283.0 734.5,277.4 741.5,276.6 748.5,285.0 755.5,288.0 762.5,290.0 769.5,289.6 776.5,284.2 783.5,271.8 790.5,271.8 796.5,265.6 803.5,263.6 810.5,264.6 817.5,274.0 824.5,277.4 831.5,279.0 838.5,278.2 845.5,276.4 852.5,268.6 859.5,269.6 866.5,286.4 873.5,302.6 880.5,314.4 887.5,321.4 894.5,323.6 901.5,307.4 908.5,294.2 915.5,289.8 922.5,291.4 929.5,290.6 936.5,304.8 943.5,313.0 950.5,322.8 957.5,342.0 963.5,371.6 970.5,382.4 977.5,391.2 984.5,396.2 991.5,387.4 998.5,365.8 1005.5,360.8 1012.5,362.6 1019.5,365.8 1026.5,384.4 1033.5,399.6 1040.5,399.8 1047.5,404.8" fill="none" stroke="#ffffff" stroke-width="1"/>
</svg>
<!-- top toolbar -->
<div style="position:absolute;left:0;top:0;width:1124px;height:19px;border-left:1px solid #b80000;border-bottom:1px solid #b80000;box-sizing:content-box;"></div>
<div style="position:absolute;left:23px;top:0;width:1px;height:19px;background:#b80000;"></div>
<svg style="position:absolute;left:4px;top:2px" width="15" height="13" viewBox="0 0 15 13"><rect x="1.5" y="1.5" width="11" height="10" rx="2" fill="none" stroke="#8a8a8a" stroke-width="1"/><rect x="8" y="3.5" width="3.5" height="6.5" fill="#9a9a9a"/></svg>
<div class="t" style="left:27px">分时</div>
<div class="t" style="left:61px">1分钟</div>
<div class="t" style="left:100px">5分钟</div>
<div class="t" style="left:139px">15分钟</div>
<div class="t" style="left:185px">30分钟</div>
<div class="t" style="left:231px">60分钟</div>
<div class="t" style="left:278px;color:#54ffff">日线</div>
<div class="t" style="left:312px">周线</div>
<div class="t" style="left:345px">月线</div>
<div class="t" style="left:378px">多周期</div>
<div class="t" style="left:422px">更多 &gt;</div>
<div class="btn" style="left:808px;width:34px">复权</div>
<div class="btn" style="left:842px;width:35px">叠加</div>
<div class="btn" style="left:876px;width:35px">多股</div>
<div class="btn" style="left:911px;width:35px">统计</div>
<div class="btn" style="left:946px;width:36px">画线</div>
<div class="btn" style="left:981px;width:36px">F10</div>
<div class="btn" style="left:1017px;width:35px">标记</div>
<div class="btn" style="left:1052px;width:35px">+自选</div>
<div class="btn" style="left:1087px;width:37px;border-right:1px solid #b80000">返回</div>
<!-- info row -->
<div class="i" style="left:3px;color:#c0c0c0">恒大高新(日线)</div>
<svg style="position:absolute;left:89px;top:23px" width="13" height="13" viewBox="0 0 13 13"><circle cx="6.3" cy="6.3" r="6" fill="#7d7d7d"/><path d="M3.2 5 L6.3 8.2 L9.4 5" fill="none" stroke="#1a1a1a" stroke-width="1.3"/></svg>
<div class="i" style="left:105px;color:#ffffff">MA5: 6.72</div>
<div class="i" style="left:163px;color:#ffff00">MA10: 6.88</div>
<div class="i" style="left:228px;color:#ff00ff">MA20: 7.01</div>
<div class="i" style="left:293px;color:#00ff00">MA60: 7.20</div>
<div class="i" style="left:358px;color:#ff00ff">二: 7.89</div>
<div class="i" style="left:405px;color:#ffff00">三: 7.41</div>
<div class="i" style="left:452px;color:#ff00ff">四: 6.93</div>
<div class="i" style="left:499px;color:#ffff00">五: 6.16</div>
<div class="i" style="left:546px;color:#00ff00">底: 5.38</div>
<svg style="position:absolute;left:1037px;top:22px" width="34" height="16" viewBox="0 0 34 16"><path d="M8 2.5 L13 7.5 L8 12.5 L3 7.5 Z" fill="none" stroke="#9a9a9a" stroke-width="1"/><rect x="20.5" y="2.5" width="11" height="10" rx="2" fill="none" stroke="#8a8a8a" stroke-width="1"/><rect x="27" y="4.5" width="3.5" height="6.5" fill="#9a9a9a"/></svg>
<svg width="1130" height="650" viewBox="0 0 1130 650" style="position:absolute;left:0;top:0" shape-rendering="crispEdges">
<rect x="1072" y="19" width="1" height="628" fill="#b80000"/>
<rect x="1124" y="0" width="1" height="650" fill="#b80000"/>
<rect x="1125" y="25" width="1" height="625" fill="#b80000"/>
<rect x="1073" y="56" width="5" height="1" fill="#b80000"/>
<rect x="1073" y="88" width="2" height="1" fill="#b80000"/>
<rect x="1073" y="119" width="5" height="1" fill="#b80000"/>
<rect x="1073" y="151" width="2" height="1" fill="#b80000"/>
<rect x="1073" y="182" width="5" height="1" fill="#b80000"/>
<rect x="1073" y="214" width="2" height="1" fill="#b80000"/>
<rect x="1073" y="244" width="5" height="1" fill="#b80000"/>
<rect x="1073" y="277" width="2" height="1" fill="#b80000"/>
<rect x="1073" y="307" width="5" height="1" fill="#b80000"/>
<rect x="1073" y="339" width="2" height="1" fill="#b80000"/>
<rect x="1073" y="370" width="5" height="1" fill="#b80000"/>
<rect x="1073" y="402" width="2" height="1" fill="#b80000"/>
<rect x="1073" y="432" width="5" height="1" fill="#b80000"/>
<rect x="1073" y="465" width="2" height="1" fill="#b80000"/>
<rect x="1073" y="495" width="5" height="1" fill="#b80000"/>
<rect x="1073" y="528" width="2" height="1" fill="#b80000"/>
<rect x="1073" y="558" width="5" height="1" fill="#b80000"/>
<rect x="0" y="630" width="1124" height="1" fill="#b80000"/>
<rect x="0" y="646" width="1124" height="1" fill="#b80000"/>
<rect x="51" y="630" width="1" height="16" fill="#b80000"/>
<rect x="205" y="630" width="1" height="16" fill="#b80000"/>
<rect x="322" y="630" width="1" height="16" fill="#b80000"/>
<rect x="462" y="630" width="1" height="16" fill="#b80000"/>
<rect x="623" y="630" width="1" height="16" fill="#b80000"/>
<rect x="859" y="630" width="1" height="16" fill="#b80000"/>
<rect x="89" y="631" width="1" height="3" fill="#b80000"/>
<rect x="129" y="631" width="1" height="3" fill="#b80000"/>
<rect x="167" y="631" width="1" height="3" fill="#b80000"/>
<rect x="234" y="631" width="1" height="3" fill="#b80000"/>
<rect x="263" y="631" width="1" height="3" fill="#b80000"/>
<rect x="293" y="631" width="1" height="3" fill="#b80000"/>
<rect x="357" y="631" width="1" height="3" fill="#b80000"/>
<rect x="392" y="631" width="1" height="3" fill="#b80000"/>
<rect x="427" y="631" width="1" height="3" fill="#b80000"/>
<rect x="501" y="631" width="1" height="3" fill="#b80000"/>
<rect x="542" y="631" width="1" height="3" fill="#b80000"/>
<rect x="583" y="631" width="1" height="3" fill="#b80000"/>
<rect x="657" y="631" width="1" height="3" fill="#b80000"/>
<rect x="693" y="631" width="1" height="3" fill="#b80000"/>
<rect x="726" y="631" width="1" height="3" fill="#b80000"/>
<rect x="810" y="631" width="1" height="3" fill="#b80000"/>
<rect x="835" y="631" width="1" height="3" fill="#b80000"/>
<rect x="896" y="631" width="1" height="3" fill="#b80000"/>
<rect x="936" y="631" width="1" height="3" fill="#b80000"/>
<rect x="975" y="631" width="1" height="3" fill="#b80000"/>
<rect x="1014" y="631" width="1" height="3" fill="#b80000"/>
<rect x="1052" y="631" width="1" height="3" fill="#b80000"/>
<rect x="1" y="647" width="1" height="3" fill="#b80000"/>
<rect x="43" y="647" width="1" height="3" fill="#b80000"/>
<rect x="73" y="647" width="1" height="3" fill="#b80000"/>
<rect x="115" y="647" width="1" height="3" fill="#b80000"/>
<rect x="144" y="647" width="1" height="3" fill="#b80000"/>
<rect x="177" y="647" width="1" height="3" fill="#b80000"/>
<rect x="208" y="647" width="1" height="3" fill="#b80000"/>
<rect x="242" y="647" width="1" height="3" fill="#b80000"/>
<rect x="275" y="647" width="1" height="3" fill="#b80000"/>
<rect x="309" y="647" width="1" height="3" fill="#b80000"/>
<rect x="332" y="647" width="1" height="3" fill="#b80000"/>
<rect x="364" y="647" width="1" height="3" fill="#b80000"/>
<rect x="390" y="647" width="1" height="3" fill="#b80000"/>
<rect x="422" y="647" width="1" height="3" fill="#b80000"/>
<rect x="452" y="647" width="1" height="3" fill="#b80000"/>
<rect x="481" y="647" width="1" height="3" fill="#b80000"/>
<rect x="509" y="647" width="1" height="3" fill="#b80000"/>
<rect x="537" y="647" width="1" height="3" fill="#b80000"/>
<rect x="568" y="647" width="1" height="3" fill="#b80000"/>
<rect x="600" y="647" width="1" height="3" fill="#b80000"/>
<rect x="628" y="647" width="1" height="3" fill="#b80000"/>
<rect x="663" y="647" width="1" height="3" fill="#b80000"/>
<rect x="696" y="647" width="1" height="3" fill="#b80000"/>
<rect x="735" y="647" width="1" height="3" fill="#b80000"/>
<rect x="766" y="647" width="1" height="3" fill="#b80000"/>
<rect x="808" y="647" width="1" height="3" fill="#b80000"/>
<rect x="840" y="647" width="1" height="3" fill="#b80000"/>
<rect x="871" y="647" width="1" height="3" fill="#b80000"/>
<rect x="905" y="647" width="1" height="3" fill="#b80000"/>
<rect x="938" y="647" width="1" height="3" fill="#b80000"/>
<rect x="848" y="648" width="18" height="2" fill="#54ffff"/>
<rect x="8" y="648" width="1" height="2" fill="#fff"/><rect x="12" y="648" width="1" height="2" fill="#fff"/><rect x="17" y="648" width="1" height="2" fill="#fff"/><rect x="21" y="648" width="1" height="2" fill="#fff"/><rect x="51" y="648" width="1" height="2" fill="#fff"/>
<rect x="1125" y="25" width="5" height="1" fill="#b80000"/>
<rect x="1125" y="45" width="5" height="1" fill="#b80000"/>
<rect x="1125" y="142" width="5" height="1" fill="#b80000"/>
<rect x="1125" y="239" width="5" height="1" fill="#b80000"/>
<rect x="1125" y="336" width="5" height="1" fill="#b80000"/>
<rect x="1125" y="397" width="5" height="1" fill="#b80000"/>
<rect x="1125" y="419" width="5" height="1" fill="#b80000"/>
<rect x="1125" y="437" width="5" height="1" fill="#b80000"/>
</svg>
<div class="ax" style="top:50.0px">9.50</div>
<div class="ax" style="top:82.5px">9.25</div>
<div class="ax" style="top:113.0px">9.00</div>
<div class="ax" style="top:145.5px">8.75</div>
<div class="ax" style="top:176.0px">8.50</div>
<div class="ax" style="top:208.5px">8.25</div>
<div class="ax" style="top:238.0px">8.00</div>
<div class="ax" style="top:271.5px">7.75</div>
<div class="ax" style="top:301.0px">7.50</div>
<div class="ax" style="top:333.5px">7.25</div>
<div class="ax" style="top:364.0px">7.00</div>
<div class="ax" style="top:396.5px">6.75</div>
<div class="ax" style="top:426.0px">6.50</div>
<div class="ax" style="top:459.5px">6.25</div>
<div class="ax" style="top:489.0px">6.00</div>
<div class="ax" style="top:522.5px">5.75</div>
<div class="ax" style="top:552.0px">5.50</div>
<div style="position:absolute;left:1073px;top:404px;width:51px;height:14px;background:#000080;border-top:1px solid #b80000;border-bottom:1px solid #b80000;color:#d0d0d0;font-size:13px;line-height:14px;">6.60</div>
<div class="og" style="left:997px;top:70px">高</div>
<div class="gv" style="left:1017px;top:65px;color:#00b4c8">9.440</div>
<div class="og" style="left:999px;top:154px">191</div>
<div class="og" style="left:999px;top:251px">382</div>
<div class="og" style="left:999px;top:311px">1/2</div>
<div class="og" style="left:999px;top:371px">618</div>
<div class="og" style="left:999px;top:469px">809</div>
<div class="og" style="left:997px;top:562px">低</div>
<div class="gv" style="left:1017px;top:567px;color:#00b4c8">5.380</div>
<div class="gv" style="left:630px;top:63px">9.44</div>
<div class="gv" style="left:177px;top:568px">5.38</div>
<svg style="position:absolute;left:0;top:0" width="1130" height="650" viewBox="0 0 1130 650"><g stroke="#c0c0c0" stroke-width="1" fill="none"><path d="M617 65.5 L628 68.5 M617 65.5 L620.5 64 M617 65.5 L619.5 68.5"/><path d="M163.5 573.5 L175 573.5 M163.5 573.5 L166.5 570.5 M163.5 573.5 L166.5 576.5"/></g></svg>
<div class="abs" style="left:350px;top:210.5px;color:#00ff00;font-size:12px">---顶</div>
<div class="abs" style="left:615px;top:32.5px;height:14px;color:#00ff00;font-size:12px;clip-path:inset(7px 0 0 0)">---顶</div>
<svg style="position:absolute;left:47px;top:562px" width="13" height="15" viewBox="0 0 14 16"><path d="M3.6 1.4 Q3.6 0.4 4.8 0.4 Q6 0.4 6.1 1.4 L6.5 4.6 L8.3 4.4 Q9.2 4.4 9.4 5.2 L10.6 5.2 Q11.4 5.3 11.5 6 L12.3 6 Q13.2 6.1 13.2 7.1 L13.2 11.2 Q13.2 15 9.8 15 L7.4 15 Q5.4 15 4.2 13 L0.9 9 Q0.3 8 1 7.5 Q1.9 7 2.7 8 L4 9.5 Z" fill="#ffc45c" stroke="#8a4a10" stroke-width="0.9"/><path d="M4.3 1.6 L4.7 8 M1.6 8.3 L4.6 12" stroke="#fff" stroke-width="0.9" fill="none"/></svg>
<svg style="position:absolute;left:165px;top:589px" width="13" height="15" viewBox="0 0 14 16"><path d="M3.6 1.4 Q3.6 0.4 4.8 0.4 Q6 0.4 6.1 1.4 L6.5 4.6 L8.3 4.4 Q9.2 4.4 9.4 5.2 L10.6 5.2 Q11.4 5.3 11.5 6 L12.3 6 Q13.2 6.1 13.2 7.1 L13.2 11.2 Q13.2 15 9.8 15 L7.4 15 Q5.4 15 4.2 13 L0.9 9 Q0.3 8 1 7.5 Q1.9 7 2.7 8 L4 9.5 Z" fill="#ffc45c" stroke="#8a4a10" stroke-width="0.9"/><path d="M4.3 1.6 L4.7 8 M1.6 8.3 L4.6 12" stroke="#fff" stroke-width="0.9" fill="none"/></svg>
<svg style="position:absolute;left:381px;top:418px" width="13" height="15" viewBox="0 0 14 16"><path d="M3.6 1.4 Q3.6 0.4 4.8 0.4 Q6 0.4 6.1 1.4 L6.5 4.6 L8.3 4.4 Q9.2 4.4 9.4 5.2 L10.6 5.2 Q11.4 5.3 11.5 6 L12.3 6 Q13.2 6.1 13.2 7.1 L13.2 11.2 Q13.2 15 9.8 15 L7.4 15 Q5.4 15 4.2 13 L0.9 9 Q0.3 8 1 7.5 Q1.9 7 2.7 8 L4 9.5 Z" fill="#ffc45c" stroke="#8a4a10" stroke-width="0.9"/><path d="M4.3 1.6 L4.7 8 M1.6 8.3 L4.6 12" stroke="#fff" stroke-width="0.9" fill="none"/></svg>
<svg style="position:absolute;left:492px;top:410px" width="13" height="15" viewBox="0 0 14 16"><path d="M3.6 1.4 Q3.6 0.4 4.8 0.4 Q6 0.4 6.1 1.4 L6.5 4.6 L8.3 4.4 Q9.2 4.4 9.4 5.2 L10.6 5.2 Q11.4 5.3 11.5 6 L12.3 6 Q13.2 6.1 13.2 7.1 L13.2 11.2 Q13.2 15 9.8 15 L7.4 15 Q5.4 15 4.2 13 L0.9 9 Q0.3 8 1 7.5 Q1.9 7 2.7 8 L4 9.5 Z" fill="#ffc45c" stroke="#8a4a10" stroke-width="0.9"/><path d="M4.3 1.6 L4.7 8 M1.6 8.3 L4.6 12" stroke="#fff" stroke-width="0.9" fill="none"/></svg>
<svg style="position:absolute;left:646px;top:428px" width="13" height="15" viewBox="0 0 14 16"><path d="M3.6 1.4 Q3.6 0.4 4.8 0.4 Q6 0.4 6.1 1.4 L6.5 4.6 L8.3 4.4 Q9.2 4.4 9.4 5.2 L10.6 5.2 Q11.4 5.3 11.5 6 L12.3 6 Q13.2 6.1 13.2 7.1 L13.2 11.2 Q13.2 15 9.8 15 L7.4 15 Q5.4 15 4.2 13 L0.9 9 Q0.3 8 1 7.5 Q1.9 7 2.7 8 L4 9.5 Z" fill="#ffc45c" stroke="#8a4a10" stroke-width="0.9"/><path d="M4.3 1.6 L4.7 8 M1.6 8.3 L4.6 12" stroke="#fff" stroke-width="0.9" fill="none"/></svg>
<svg style="position:absolute;left:826px;top:334px" width="13" height="15" viewBox="0 0 14 16"><path d="M3.6 1.4 Q3.6 0.4 4.8 0.4 Q6 0.4 6.1 1.4 L6.5 4.6 L8.3 4.4 Q9.2 4.4 9.4 5.2 L10.6 5.2 Q11.4 5.3 11.5 6 L12.3 6 Q13.2 6.1 13.2 7.1 L13.2 11.2 Q13.2 15 9.8 15 L7.4 15 Q5.4 15 4.2 13 L0.9 9 Q0.3 8 1 7.5 Q1.9 7 2.7 8 L4 9.5 Z" fill="#ffc45c" stroke="#8a4a10" stroke-width="0.9"/><path d="M4.3 1.6 L4.7 8 M1.6 8.3 L4.6 12" stroke="#fff" stroke-width="0.9" fill="none"/></svg>
<svg style="position:absolute;left:938px;top:392px" width="13" height="15" viewBox="0 0 14 16"><path d="M3.6 1.4 Q3.6 0.4 4.8 0.4 Q6 0.4 6.1 1.4 L6.5 4.6 L8.3 4.4 Q9.2 4.4 9.4 5.2 L10.6 5.2 Q11.4 5.3 11.5 6 L12.3 6 Q13.2 6.1 13.2 7.1 L13.2 11.2 Q13.2 15 9.8 15 L7.4 15 Q5.4 15 4.2 13 L0.9 9 Q0.3 8 1 7.5 Q1.9 7 2.7 8 L4 9.5 Z" fill="#ffc45c" stroke="#8a4a10" stroke-width="0.9"/><path d="M4.3 1.6 L4.7 8 M1.6 8.3 L4.6 12" stroke="#fff" stroke-width="0.9" fill="none"/></svg>
<svg style="position:absolute;left:1029px;top:492px" width="13" height="15" viewBox="0 0 14 16"><path d="M3.6 1.4 Q3.6 0.4 4.8 0.4 Q6 0.4 6.1 1.4 L6.5 4.6 L8.3 4.4 Q9.2 4.4 9.4 5.2 L10.6 5.2 Q11.4 5.3 11.5 6 L12.3 6 Q13.2 6.1 13.2 7.1 L13.2 11.2 Q13.2 15 9.8 15 L7.4 15 Q5.4 15 4.2 13 L0.9 9 Q0.3 8 1 7.5 Q1.9 7 2.7 8 L4 9.5 Z" fill="#ffc45c" stroke="#8a4a10" stroke-width="0.9"/><path d="M4.3 1.6 L4.7 8 M1.6 8.3 L4.6 12" stroke="#fff" stroke-width="0.9" fill="none"/></svg>
<svg style="position:absolute;left:346px;top:227px" width="13" height="16" viewBox="0 0 13 16"><circle cx="6.6" cy="2.4" r="2" fill="#f8b848" stroke="#a05a10" stroke-width="0.6"/><path d="M5.6 5 L11 6.2 L11 8 L8.2 8.6 L12 13.2 L10.4 14.8 L6 10.8 L1.4 14.8 L0.2 13.2 L3.6 9 L4.5 5.4 Z" fill="#f8b848" stroke="#a05a10" stroke-width="0.6"/></svg>
<svg style="position:absolute;left:611px;top:52px" width="13" height="16" viewBox="0 0 13 16"><circle cx="6.6" cy="2.4" r="2" fill="#f8b848" stroke="#a05a10" stroke-width="0.6"/><path d="M5.6 5 L11 6.2 L11 8 L8.2 8.6 L12 13.2 L10.4 14.8 L6 10.8 L1.4 14.8 L0.2 13.2 L3.6 9 L4.5 5.4 Z" fill="#f8b848" stroke="#a05a10" stroke-width="0.6"/></svg>
<svg style="position:absolute;left:326px;top:314px" width="13" height="16" viewBox="0 0 13 16"><circle cx="6.6" cy="2.4" r="2" fill="#f8b848" stroke="#a05a10" stroke-width="0.6"/><path d="M5.6 5 L11 6.2 L11 8 L8.2 8.6 L12 13.2 L10.4 14.8 L6 10.8 L1.4 14.8 L0.2 13.2 L3.6 9 L4.5 5.4 Z" fill="#f8b848" stroke="#a05a10" stroke-width="0.6"/></svg>
<svg style="position:absolute;left:284px;top:415px" width="13" height="16" viewBox="0 0 13 16"><circle cx="6.6" cy="2.4" r="2" fill="#f8b848" stroke="#a05a10" stroke-width="0.6"/><path d="M5.6 5 L11 6.2 L11 8 L8.2 8.6 L12 13.2 L10.4 14.8 L6 10.8 L1.4 14.8 L0.2 13.2 L3.6 9 L4.5 5.4 Z" fill="#f8b848" stroke="#a05a10" stroke-width="0.6"/></svg>
<div class="mk" style="left:288px;background:#1c4a8c">财</div>
<div class="mk" style="left:616px;background:#a85a14;width:12px">榜</div>
<div class="mk" style="left:628px;background:#0a7a0a;width:12px">跌</div>
<div class="mk" style="left:684px;background:#7a0a0a">涨</div>
<div class="mk" style="left:756px;background:#c05a0a">预</div>
<div class="dl" style="left:3px">2025年</div>
<div class="dl" style="left:53px">9</div>
<div class="dl" style="left:207px">10</div>
<div class="dl" style="left:324px">11</div>
<div class="dl" style="left:464px">12</div>
<div class="dl" style="left:625px">1</div>
<div class="dl" style="left:861px">3</div>
<div style="position:absolute;left:729px;top:631px;width:79px;height:15px;background:#000080;border-left:1px solid #b80000;border-right:1px solid #b80000;color:#d0d0d0;font-size:12px;line-height:15px;white-space:nowrap;overflow:hidden;padding-left:1px;box-sizing:border-box">2026/01/26/一</div>
<div style="position:absolute;left:1127px;top:28px;width:3px;height:16px;overflow:hidden;color:#e0e0e0;font-size:12px;line-height:16px;">委</div>
<div style="position:absolute;left:1127px;top:49px;width:3px;height:552px;overflow:hidden;color:#e0e0e0;font-size:12px;line-height:16px;">卖<br>卖<br>卖<br>卖<br>卖<br>卖<br>卖<br>卖<br>卖<br>卖<br>卖<br>卖<br>买<br>买<br>买<br>买<br>买<br>买<br>现<br>涨<br>涨<br>总<br>现<br>外<br>换<br>净<br>1<br>1<br>1<br>1<br>1<br>1<br>1<br>1</div>
<div style="position:absolute;left:971px;top:600px;width:159px;height:50px;background:#3b3636;"></div>
<div style="position:absolute;left:971px;top:603px;width:159px;text-align:center;color:#fff;font-weight:bold;font-size:18px;line-height:26px;">指标公式网</div>
<div style="position:absolute;left:971px;top:628.5px;width:164px;text-align:center;color:#fff;font-family:DejaVu Sans,sans-serif;font-size:14.8px;line-height:18px;text-shadow:0 0 1px #4a7ab0">www.zbgs3.com</div>
</body>
</html>
